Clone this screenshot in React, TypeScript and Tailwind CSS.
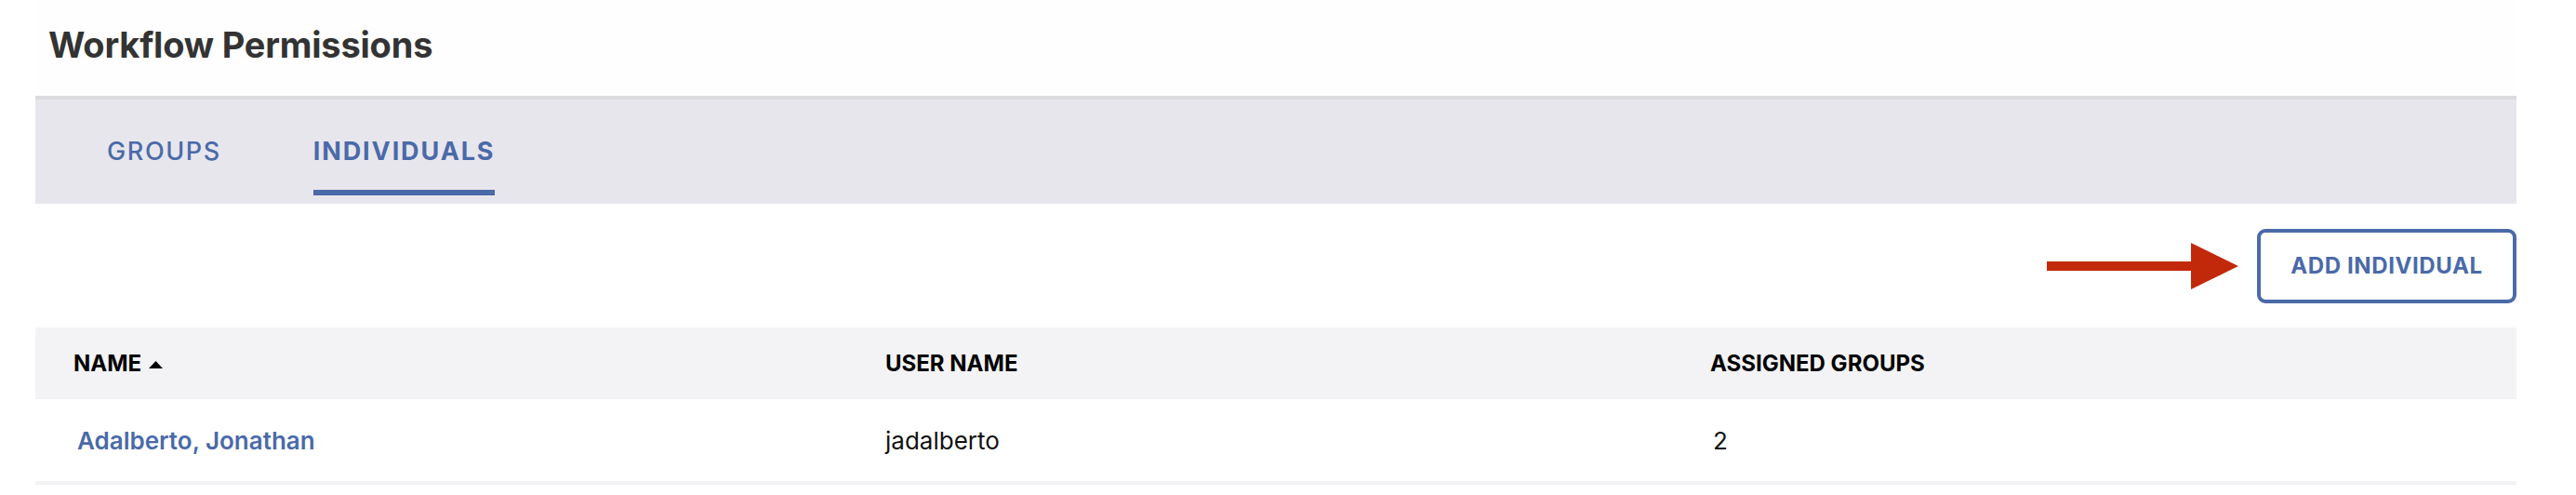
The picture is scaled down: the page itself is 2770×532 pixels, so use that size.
/* Workflow Permissions: tabbed permissions panel with individuals table */
const font = 'font-["Inter","Liberation_Sans",sans-serif]'

interface Individual {
  name: string
  userName: string
  assignedGroups: number
}

const individuals: Individual[] = [
  { name: 'Adalberto, Jonathan', userName: 'jadalberto', assignedGroups: 2 },
]

function SortCaret() {
  return (
    <svg width="15" height="8" viewBox="0 0 15 8" className="ml-2 mt-[2px]" aria-hidden="true">
      <path d="M7.5 0L15 8H0z" fill="currentColor" />
    </svg>
  )
}

/* Red annotation arrow pointing at the add button */
function PointerArrow() {
  return (
    <svg width="206" height="50" viewBox="0 0 206 50" aria-hidden="true">
      <rect x="0" y="20" width="156" height="10" fill="#c2290b" />
      <path d="M155 0L206 25L155 50z" fill="#c2290b" />
    </svg>
  )
}

export default function App() {
  return (
    <div className={`${font} min-h-[532px] w-full bg-white pl-[38px] pr-[64px]`}>
      {/* Page title */}
      <div className="flex h-[103px] items-center bg-[#fefefe] pb-[6px] pl-[14px]">
        <h1 className="text-[38px] font-bold tracking-[-0.2px] text-[#333333]">Workflow Permissions</h1>
      </div>

      {/* Tabs */}
      <div className="flex h-[116px] items-end border-t-4 border-[#dcdbdf] bg-[#e8e6ed] pb-[9px] pl-[77px]">
        <button
          type="button"
          className="flex h-[84px] flex-col justify-start pt-[17px] text-[27px] font-medium tracking-[1.6px] text-[#4a6aa9]"
        >
          GROUPS
        </button>
        <button
          type="button"
          className="ml-[99px] flex h-[84px] flex-col justify-start border-b-[6px] border-[#4a6aa9] pt-[17px] text-[27px] font-bold tracking-[1.9px] text-[#4a6aa9]"
        >
          INDIVIDUALS
        </button>
      </div>

      {/* Actions */}
      <div className="flex items-center justify-end gap-[20px] pb-[26px] pt-[27px]">
        <PointerArrow />
        <button
          type="button"
          className="flex h-[80px] w-[279px] items-center justify-center rounded-[9px] border-4 border-[#4a6aa9] bg-white text-[24px] font-bold tracking-[0.6px] text-[#4a6aa9]"
        >
          ADD INDIVIDUAL
        </button>
      </div>

      {/* Individuals table */}
      <div className="grid grid-cols-[873px_890px_1fr]">
        <div className="flex h-[77px] items-center rounded-tl-[3px] bg-[#f3f3f5] pl-[41px] text-[24px] font-bold text-black">
          NAME
          <SortCaret />
        </div>
        <div className="flex h-[77px] items-center bg-[#f3f3f5] pl-[41px] text-[24px] font-bold text-black">
          USER NAME
        </div>
        <div className="flex h-[77px] items-center rounded-tr-[3px] bg-[#f3f3f5] pl-[38px] text-[24px] font-bold text-black">
          ASSIGNED GROUPS
        </div>

        {individuals.map((person) => (
          <div key={person.userName} className="contents">
            <div className="flex h-[92px] items-center border-b-4 border-[#f3f3f5] pl-[45px] text-[26px] font-semibold text-[#4a6aa9]">
              <a href="#" className="pt-[1px]">
                {person.name}
              </a>
            </div>
            <div className="flex h-[92px] items-center border-b-4 border-[#f3f3f5] pl-[41px] pt-[1px] text-[26px] text-[#111111]">
              {person.userName}
            </div>
            <div className="flex h-[92px] items-center border-b-4 border-[#f3f3f5] pl-[41px] pt-[1px] text-[26px] text-[#111111]">
              {person.assignedGroups}
            </div>
          </div>
        ))}
      </div>
    </div>
  )
}
